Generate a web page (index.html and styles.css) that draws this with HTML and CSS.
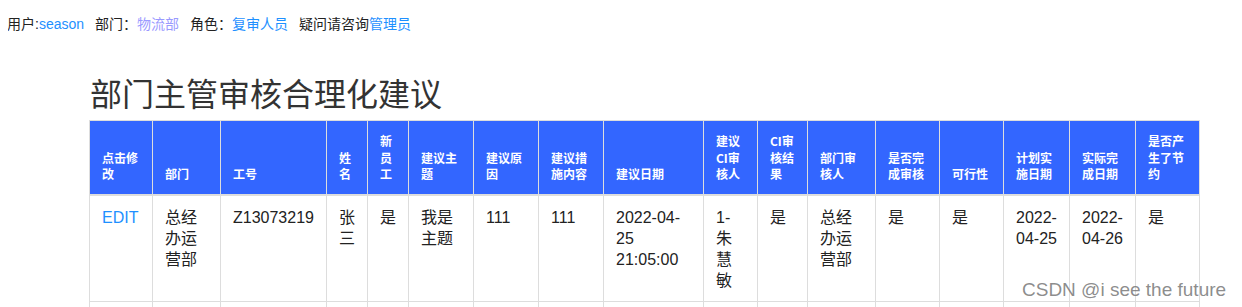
FILE: index.html
```html
<!DOCTYPE html>
<html lang="zh">
<head>
<meta charset="utf-8">
<title>部门主管审核合理化建议</title>
<link rel="stylesheet" href="styles.css">
</head>
<body>
<div class="userbar">
  <span class="item">用户:<a class="link" href="#">season</a></span>
  <span class="item">部门：<a class="link visited" href="#">物流部</a></span>
  <span class="item">角色：<a class="link" href="#">复审人员</a></span>
  <span class="item">疑问请咨询<a class="link" href="#">管理员</a></span>
</div>
<div class="main">
  <h1 class="title">部门主管审核合理化建议</h1>
  <table class="grid">
    <colgroup>
      <col class="w63"><col class="w68"><col class="w106"><col class="w41"><col class="w41">
      <col class="w65"><col class="w65"><col class="w65"><col class="w100"><col class="w54">
      <col class="w50"><col class="w68"><col class="w64"><col class="w64"><col class="w66">
      <col class="w66"><col class="w64">
    </colgroup>
    <thead>
      <tr>
        <th>点击修改</th><th>部门</th><th>工号</th><th>姓名</th><th>新员工</th>
        <th>建议主题</th><th>建议原因</th><th>建议措施内容</th><th>建议日期</th><th>建议CI审核人</th>
        <th>CI审核结果</th><th>部门审核人</th><th>是否完成审核</th><th>可行性</th><th>计划实施日期</th>
        <th>实际完成日期</th><th>是否产生了节约</th>
      </tr>
    </thead>
    <tbody>
      <tr>
        <td><a class="link" href="#">EDIT</a></td>
        <td>总经办运营部</td>
        <td>Z13073219</td>
        <td>张三</td>
        <td>是</td>
        <td>我是主题</td>
        <td>111</td>
        <td>111</td>
        <td>2022-04-25 21:05:00</td>
        <td>1-朱慧敏</td>
        <td>是</td>
        <td>总经办运营部</td>
        <td>是</td>
        <td>是</td>
        <td>2022-04-25</td>
        <td>2022-04-26</td>
        <td>是</td>
      </tr>
      <tr class="empty">
        <td></td><td></td><td></td><td></td><td></td><td></td><td></td><td></td><td></td>
        <td></td><td></td><td></td><td></td><td></td><td></td><td></td><td></td>
      </tr>
    </tbody>
  </table>
</div>
<div class="watermark">CSDN @i see the future</div>
</body>
</html>
```

FILE: styles.css
```css
html, body {
  margin: 0;
  padding: 0;
}
body {
  margin: 8px;
  font-family: "Liberation Sans", "Noto Sans CJK SC", sans-serif;
  color: #222;
  background: #fff;
  overflow: hidden;
}
.userbar {
  padding-top: 6px;
  margin-left: -1px;
  font-size: 14px;
  line-height: 20px;
  color: #222;
  display: flex;
  gap: 11px;
}
.link {
  color: #1e90ff;
  text-decoration: none;
}
.link.visited {
  color: #9a9aff;
}
.main {
  margin-left: 81px;
  width: 1111px;
}
.title {
  margin: 41px 0 10px 1px;
  font-size: 32px;
  line-height: 35px;
  font-weight: 400;
  color: #333;
  font-family: "Noto Sans CJK SC", "Liberation Sans", sans-serif;
}
.grid {
  border-collapse: collapse;
  table-layout: fixed;
  width: 1111px;
}
.w63 { width: 63px; }
.w68 { width: 68px; }
.w106 { width: 106px; }
.w41 { width: 41px; }
.w65 { width: 65px; }
.w100 { width: 100px; }
.w54 { width: 54px; }
.w50 { width: 50px; }
.w64 { width: 64px; }
.w66 { width: 66px; }
.grid th, .grid td {
  border: 1px solid #ddd;
}
.grid th {
  background: #3366ff;
  color: #fff;
  font-size: 12px;
  font-weight: 700;
  line-height: 16.5px;
  text-align: left;
  vertical-align: bottom;
  padding: 12px 12px 11px 12px;
  font-family: "Noto Sans CJK SC", "Liberation Sans", sans-serif;
}
.grid thead tr {
  border-bottom: 2px solid #ddd;
}
.grid td {
  font-size: 16px;
  line-height: 21px;
  vertical-align: top;
  padding: 11px 12px 10px 12px;
  color: #222;
}
.grid .empty td {
  height: 20px;
}
.watermark {
  position: absolute;
  left: 1022px;
  top: 278px;
  font-size: 19px;
  line-height: 24px;
  color: rgba(120, 120, 120, 0.85);
  font-family: "Liberation Sans", sans-serif;
  white-space: nowrap;
}
```
